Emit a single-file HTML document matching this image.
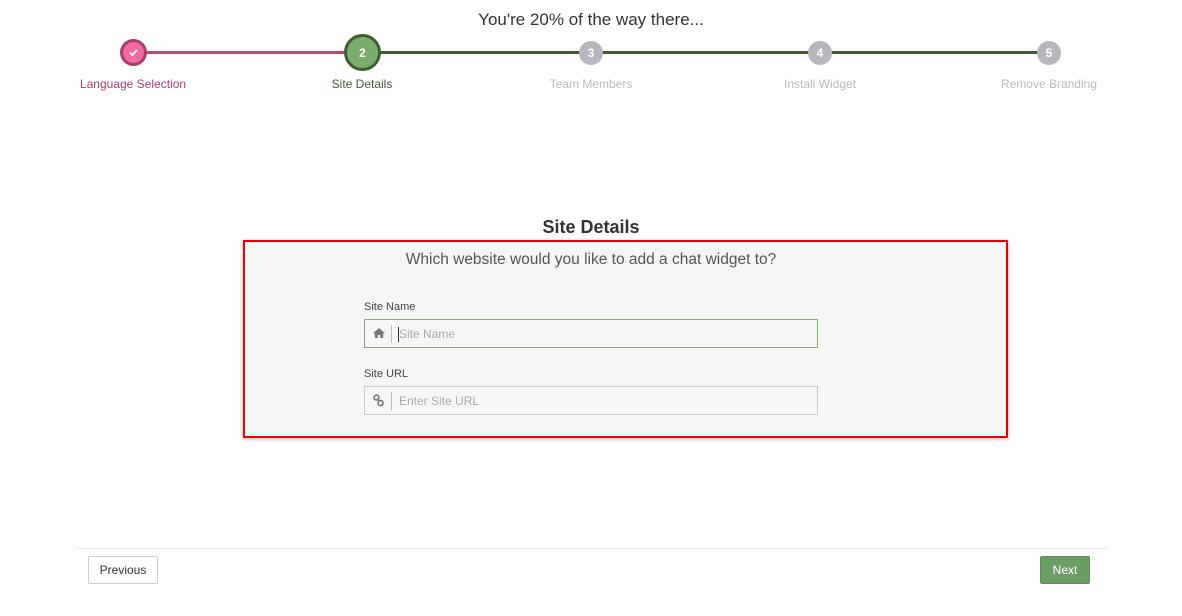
<!DOCTYPE html>
<html><head><meta charset="utf-8"><style>
body{margin:0;width:1182px;height:616px;background:#fff;font-family:"Liberation Sans",sans-serif;position:relative;overflow:hidden}
.a{position:absolute}
.t{font-size:12px;transform:translateX(-50%);white-space:nowrap;top:77px}
.c{position:absolute;border-radius:50%;color:#fff;font-weight:bold;font-size:12px;display:flex;align-items:center;justify-content:center;box-sizing:border-box}
.inp{position:absolute;left:364px;width:454px;height:29px;box-sizing:border-box;border:1px solid #ccc;background:#f6f6f6}
.inp .sep{position:absolute;left:26px;top:5px;height:18px;border-left:1px solid #bbb}
.inp .ph{position:absolute;left:34px;top:7px;font-size:12px;color:#aaa}
.lbl{position:absolute;left:364px;font-size:11px;color:#444}
</style></head><body>
<div class="a" style="left:0;width:1182px;top:10px;text-align:center;font-size:17px;color:#333">You're 20% of the way there...</div>
<div class="a" style="left:133px;width:229px;top:51px;height:3px;background:#b04a7a"></div>
<div class="a" style="left:362px;width:687px;top:51px;height:3px;background:#3d5e33"></div>
<div class="c" style="left:120px;top:39px;width:27px;height:27px;background:#f06ba2;border:3px solid #a83f6e"><svg width="9" height="7" viewBox="0 0 9 7"><path d="M1 3.5L3.5 6L8 1" stroke="#fff" stroke-width="1.8" fill="none"/></svg></div>
<div class="c" style="left:344px;top:34px;width:37px;height:37px;background:#7aac6e;border:3px solid #3d5e33">2</div>
<div class="c" style="left:579px;top:41px;width:24px;height:24px;background:#b8b8bc">3</div>
<div class="c" style="left:808px;top:41px;width:24px;height:24px;background:#b8b8bc">4</div>
<div class="c" style="left:1037px;top:41px;width:24px;height:24px;background:#b8b8bc">5</div>
<div class="a t" style="left:133px;color:#a83f6e">Language Selection</div>
<div class="a t" style="left:362px;color:#3d5e33">Site Details</div>
<div class="a t" style="left:591px;color:#bbb">Team Members</div>
<div class="a t" style="left:820px;color:#bbb">Install Widget</div>
<div class="a t" style="left:1049px;color:#bbb">Remove Branding</div>
<div class="a" style="left:0;width:1182px;top:217px;text-align:center;font-size:18px;font-weight:bold;color:#333">Site Details</div>
<div class="a" style="left:243px;top:240px;width:765px;height:198px;box-sizing:border-box;border:2px solid #e00;background:#f6f6f6;box-shadow:0 1px 4px rgba(0,0,0,.3)"></div>
<div class="a" style="left:0;width:1182px;top:251px;text-align:center;font-size:15.5px;color:#555">Which website would you like to add a chat widget to?</div>
<div class="lbl" style="top:301px">Site Name</div>
<div class="inp" style="top:319px;border-color:#90a888"><svg class="a" style="left:8px;top:8px" width="12" height="10" viewBox="0 0 12 10"><path d="M6 0L0 5.2h1.8V10h3V7h2.4v3h3V5.2H12z" fill="#777"/></svg><div class="sep"></div><div class="a" style="left:33px;top:7px;height:15px;border-left:1px solid #333"></div><span class="ph">Site Name</span></div>
<div class="lbl" style="top:368px">Site URL</div>
<div class="inp" style="top:386px"><svg class="a" style="left:8px;top:7px" width="11" height="13" viewBox="0 0 11 13"><circle cx="3.5" cy="3.5" r="2.5" stroke="#777" stroke-width="1.6" fill="none"/><circle cx="7.5" cy="9" r="2.5" stroke="#777" stroke-width="1.6" fill="none"/><path d="M4.5 5L6.5 7.5" stroke="#777" stroke-width="1.6"/></svg><div class="sep"></div><span class="ph">Enter Site URL</span></div>
<div class="a" style="left:76px;width:1032px;top:548px;border-top:1px solid #e5e5e5"></div>
<div class="a" style="left:88px;top:556px;width:70px;height:28px;box-sizing:border-box;border:1px solid #ccc;border-radius:2px;font-size:12px;color:#333;display:flex;align-items:center;justify-content:center">Previous</div>
<div class="a" style="left:1040px;top:556px;width:50px;height:28px;box-sizing:border-box;background:#6b9e65;border:1px solid #5d8d57;border-radius:2px;font-size:12px;color:#fff;display:flex;align-items:center;justify-content:center">Next</div>
</body></html>
